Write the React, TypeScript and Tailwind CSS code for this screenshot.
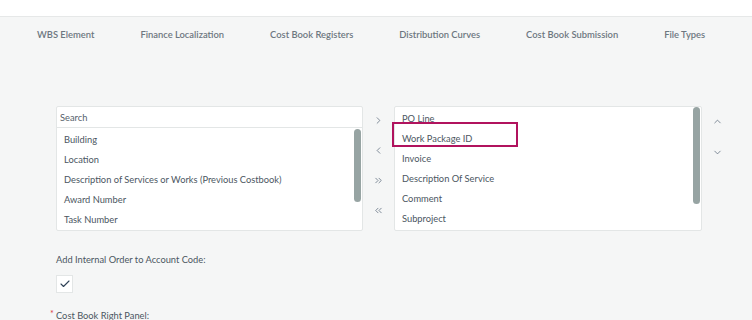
import { ChevronLeft, ChevronRight, ChevronsLeft, ChevronsRight, ChevronUp, ChevronDown, Check } from 'lucide-react'

const TABS = ['WBS Element', 'Finance Localization', 'Cost Book Registers', 'Distribution Curves', 'Cost Book Submission', 'File Types']

const AVAILABLE = [
  'Building',
  'Location',
  'Description of Services or Works (Previous Costbook)',
  'Award Number',
  'Task Number',
]

const SELECTED = ['PO Line', 'Work Package ID', 'Invoice', 'Description Of Service', 'Comment', 'Subproject']

export default function App() {
  return (
    <div className="w-[752px] h-[320px] overflow-hidden bg-[#f5f6f6] text-[#4b5661] font-['Lato','Noto_Sans',sans-serif] text-[9.3px]">
      {/* Top white band */}
      <div className="h-[17px] bg-white border-b border-[#e6e8e8]" />

      {/* Tabs */}
      <div className="flex gap-[46px] pl-[37px] pt-[11px] h-[36px] text-[9.4px] font-semibold text-[#6d7780]">
        {TABS.map((t) => (
          <span key={t}>{t}</span>
        ))}
      </div>

      {/* Dual list */}
      <div className="flex mt-[53px] pl-[56px]">
        {/* Available list */}
        <div className="w-[307px] h-[125px] border border-[#e3e6e6] bg-white rounded-[2px] flex flex-col">
          <div className="h-[22px] border-b border-[#e3e6e6] px-[3px] pt-[1px] flex items-center text-[#56616b]">Search</div>
          <div className="flex-1 flex">
            <div className="flex-1 pl-[7px] pt-[2px]">
              {AVAILABLE.map((a) => (
                <div key={a} className="h-[20px] flex items-center">{a}</div>
              ))}
            </div>
            <div className="w-[7px] mr-[1px] mt-[1px] h-[73px] rounded-full bg-[#97a4a3]" />
          </div>
        </div>

        {/* Move buttons */}
        <div className="w-[31px] flex flex-col items-center pt-[9px] gap-[19px] text-[#566577]">
          <ChevronRight size={11} strokeWidth={1.6} />
          <ChevronLeft size={11} strokeWidth={1.6} />
          <ChevronsRight size={11} strokeWidth={1.6} />
          <ChevronsLeft size={11} strokeWidth={1.6} />
        </div>

        {/* Selected list */}
        <div className="w-[308px] h-[125px] border border-[#e3e6e6] bg-white rounded-[2px] flex">
          <div className="flex-1 pt-[2px]">
            {SELECTED.map((s) => (
              <div key={s} className="relative h-[20px] flex items-center pl-[7px]">
                {s}
                {s === 'Work Package ID' && (
                  <div className="absolute left-[-3px] top-[-7px] w-[126px] h-[25px] border-2 border-[#b1135e]" />
                )}
              </div>
            ))}
          </div>
          <div className="w-[7px] mr-[1px] h-[97px] rounded-full bg-[#97a4a3]" />
        </div>

        {/* Order buttons */}
        <div className="w-[31px] flex flex-col items-center pt-[10px] gap-[20px] text-[#566577]">
          <ChevronUp size={11} strokeWidth={1.6} />
          <ChevronDown size={11} strokeWidth={1.6} />
        </div>
      </div>

      {/* Checkbox field */}
      <div className="pl-[56px] mt-[22px]">
        <div className="h-[14px] flex items-center">Add Internal Order to Account Code:</div>
        <div className="mt-[8px] w-[17px] h-[18px] bg-white border border-[#e3e6e6] flex items-center justify-center text-[#2f4257]">
          <Check size={12} strokeWidth={2.2} />
        </div>
      </div>

      <div className="pl-[50px] mt-[16px] flex items-start">
        <span className="text-[#d9363e] text-[9px] leading-[10px] w-[6px]">*</span>
        <span>Cost Book Right Panel:</span>
      </div>
    </div>
  )
}
